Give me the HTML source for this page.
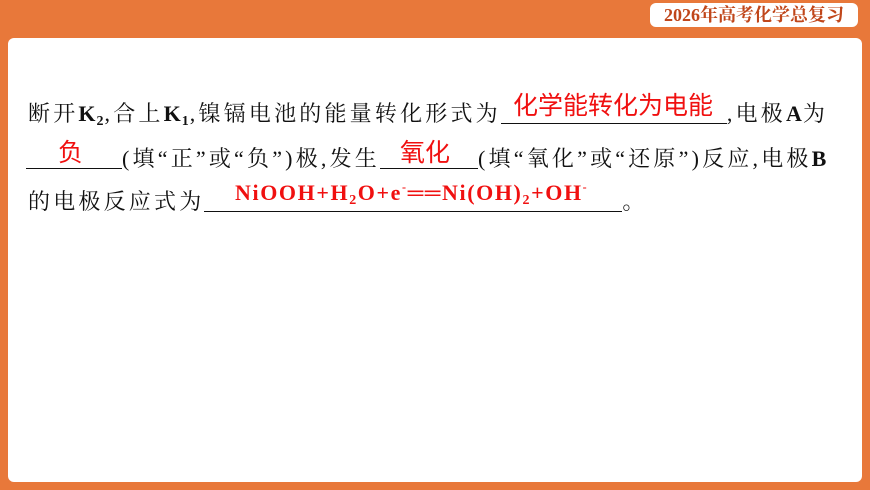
<!DOCTYPE html>
<html><head><meta charset="utf-8"><style>
body{margin:0;width:870px;height:490px;background:#E8783A;position:relative;overflow:hidden;font-family:"Liberation Serif","Noto Serif CJK SC",serif;}
.panel{position:absolute;left:8px;top:38px;width:854px;height:444px;background:#fff;border-radius:6px;}
.badge{position:absolute;left:650px;top:3px;width:208px;height:24px;background:#fff;border-radius:6px;color:#C0461A;font:bold 18px "Liberation Serif","Noto Serif CJK SC",serif;text-align:center;line-height:24px;}
.line{position:absolute;left:28px;font-size:22px;color:#111;white-space:nowrap;letter-spacing:3.2px;}
.u{display:inline-block;border-bottom:1.5px solid #111;height:22px;vertical-align:-3px;letter-spacing:0}
.r{position:absolute;color:#f01010;font-family:"Liberation Sans","Noto Sans CJK SC",sans-serif;font-size:25px;white-space:nowrap;}
.rb{position:absolute;color:#f01010;font:bold 22px "Liberation Serif",serif;white-space:nowrap;letter-spacing:1.6px}
sub{font-size:14px;vertical-align:-4px;line-height:0}
sup{font-size:12px;vertical-align:9px;line-height:0}
b{font-weight:bold;letter-spacing:1px}
</style></head><body>
<div class="badge">2026年高考化学总复习</div>
<div class="panel"></div>
<div class="line" style="top:97px">断开<b>K<sub>2</sub></b>,合上<b>K<sub>1</sub></b>,镍镉电池的能量转化形式为<span class="u" style="width:226px"></span>,电极<b>A</b>为</div>
<div class="line" style="top:142px;left:26px"><span class="u" style="width:96px"></span>(填“正”或“负”)极,发生<span class="u" style="width:98px"></span>(填“氧化”或“还原”)反应,电极<b>B</b></div>
<div class="line" style="top:185px">的电极反应式为<span class="u" style="width:418px"></span>。</div>
<div class="r" style="left:513px;top:86px">化学能转化为电能</div>
<div class="r" style="left:58px;top:133px">负</div>
<div class="r" style="left:400px;top:133px">氧化</div>
<div class="rb" style="left:235px;top:180px">NiOOH+H<sub>2</sub>O+e<sup>-</sup>══Ni(OH)<sub>2</sub>+OH<sup>-</sup></div>
</body></html>
